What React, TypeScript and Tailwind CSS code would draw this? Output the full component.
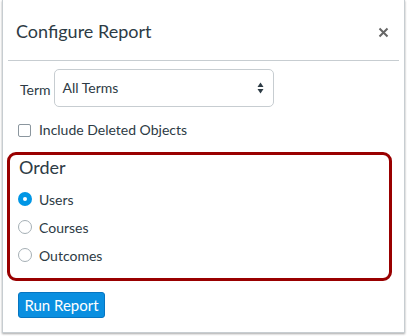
export default function App() {
  return (
    <div className="w-[407px] h-[336px] bg-white font-['Lato','Liberation_Sans',sans-serif] text-[#2d3b45]">
      <div className="ml-[2px] w-[403px] h-[333px] bg-white border-x border-b border-[#c7cdd1] shadow-[0_1px_2px_rgba(0,0,0,0.35)]">
        {/* header */}
        <div className="h-[60px] flex items-center justify-between pl-[13px] pr-[15px] pt-[2px]">
          <h2 className="text-[18px] leading-none">Configure Report</h2>
          <svg width="11" height="11" viewBox="0 0 11 11" className="mt-[2px]">
            <path d="M1.5 1.5 L9.5 9.5 M9.5 1.5 L1.5 9.5" stroke="#666" strokeWidth="2" />
          </svg>
        </div>
        <div className="mx-[5px] h-px bg-[#c7cdd1]" />

        <div className="pl-[17px] pr-[12px] pt-[8px]">
          {/* term */}
          <div className="flex items-end gap-[3px]">
            <span className="text-[14px] mb-[7px]">Term</span>
            <div className="w-[220px] h-[38px] border border-[#c7cdd1] rounded-[5px] flex items-center justify-between pl-[8px] pr-[9px]">
              <span className="text-[14px] -mt-[2px]">All Terms</span>
              <svg width="7" height="12" viewBox="0 0 7 12">
                <path d="M3.5 0.5 L6.5 5 L0.5 5 Z" fill="#2d3b45" />
                <path d="M3.5 11.5 L6.5 7 L0.5 7 Z" fill="#2d3b45" />
              </svg>
            </div>
          </div>

          {/* checkbox */}
          <div className="flex items-center gap-[8px] mt-[13px] -ml-[2px]">
            <div className="w-[13px] h-[13px] border border-[#8b969e] rounded-[2px] bg-white" />
            <span className="text-[14px] leading-[20px]">Include Deleted Objects</span>
          </div>
        </div>

        {/* order */}
        <div className="ml-[4px] mt-[12px] w-[385px] h-[129px] border-[3px] border-[#990000] rounded-[9px] pl-[8px]">
          <div className="text-[18px] leading-[24px] pl-[1px]">Order</div>
          <div className="flex flex-col gap-[10px] mt-[11px]">
            <label className="flex items-center gap-[7px] h-[18px]">
              <span className="w-[14px] h-[14px] rounded-full bg-[#0096e5] flex items-center justify-center">
                <span className="w-[4px] h-[4px] rounded-full bg-white" />
              </span>
              <span className="text-[14px]">Users</span>
            </label>
            <label className="flex items-center gap-[7px] h-[18px]">
              <span className="w-[14px] h-[14px] rounded-full border border-[#a5afb5] bg-white" />
              <span className="text-[14px]">Courses</span>
            </label>
            <label className="flex items-center gap-[7px] h-[18px]">
              <span className="w-[14px] h-[14px] rounded-full border border-[#a5afb5] bg-white" />
              <span className="text-[14px]">Outcomes</span>
            </label>
          </div>
        </div>

        <div className="pl-[15px] mt-[11px]">
          <button className="w-[87px] h-[26px] bg-[#0a8fe0] border border-[#0675c1] rounded-[3px] text-white text-[15px] leading-none">
            Run Report
          </button>
        </div>
      </div>
    </div>
  );
}
